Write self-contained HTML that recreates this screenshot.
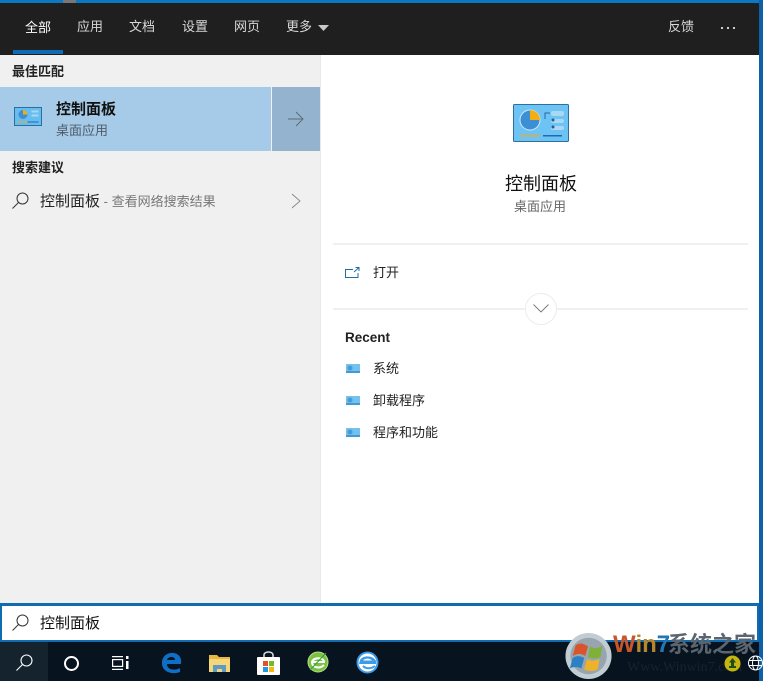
<!DOCTYPE html>
<html lang="zh-CN"><head><meta charset="utf-8"><title>控制面板</title>
<style>
html,body{margin:0;padding:0;background:#fff}
#r{position:relative;width:763px;height:681px;overflow:hidden;background:#fff;font-family:"Liberation Sans","Noto Sans CJK SC",sans-serif}
.b{position:absolute}
.t{position:absolute;white-space:nowrap;line-height:20px;height:20px;font-size:13px;color:#1a1a1a}
.n{color:#d8d8d8}
svg{position:absolute;overflow:visible}
</style></head><body><div id="r">
<div class="b" style="left:0;top:0;width:763px;height:3px;background:#0b78c4"></div>
<div class="b" style="left:63px;top:0;width:13px;height:3px;background:#777"></div>
<div class="b" style="left:0;top:3px;width:759px;height:52px;background:#1f1f1f"></div>
<div class="b" style="left:759px;top:0;width:4px;height:681px;background:#0d5fa8"></div>
<div class="b" style="left:13px;top:50px;width:50px;height:4px;background:#0f6cb4"></div>
<div class="t" style="left:25px;top:18px;color:#fff">全部</div>
<div class="t n" style="left:77px;top:17px">应用</div>
<div class="t n" style="left:129px;top:17px">文档</div>
<div class="t n" style="left:182px;top:17px">设置</div>
<div class="t n" style="left:234px;top:17px">网页</div>
<div class="t n" style="left:286px;top:17px">更多</div>
<svg style="left:318px;top:25px" width="11" height="6"><path d="M0 0H11L5.500 6Z" fill="#c8c8c8"/></svg>
<div class="t n" style="left:668px;top:17px">反馈</div>
<div class="b" style="left:721px;top:27px;width:2px;height:2px;background:#ccc"></div>
<div class="b" style="left:727px;top:27px;width:2px;height:2px;background:#ccc"></div>
<div class="b" style="left:733px;top:27px;width:2px;height:2px;background:#ccc"></div>

<div class="b" style="left:0;top:55px;width:320px;height:548px;background:#f0f0f0"></div>
<div class="b" style="left:320px;top:55px;width:1px;height:548px;background:#e8e8e8"></div>
<div class="t" style="left:12px;top:62px;font-weight:bold;color:#222">最佳匹配</div>
<div class="b" style="left:0;top:87px;width:271px;height:64px;background:#a6cbe8"></div>
<div class="b" style="left:272px;top:87px;width:48px;height:64px;background:#93b3ce"></div>
<svg style="left:14px;top:106px" width="28" height="21" viewBox="0 0 56 38"><rect x="1" y="1" width="54" height="36" fill="#66bdf0" stroke="#2b6f9f" stroke-width="2"/><circle cx="18" cy="15" r="9" fill="#3f8fd0"/><path d="M18 15V6A9 9 0 0 1 27 15Z" fill="#f4ae14"/><rect x="35" y="7" width="14" height="4" fill="#a9d8f3"/><rect x="35" y="15" width="14" height="4" fill="#a9d8f3"/><rect x="7" y="29" width="20" height="2" fill="#e6ad2c"/><rect x="27" y="29" width="22" height="2" fill="#1d6bb0"/></svg>
<div class="t" style="left:56px;top:100px;font-size:15px;font-weight:bold;color:#111">控制面板</div>
<div class="t" style="left:56px;top:121px;color:#4f5c68">桌面应用</div>
<svg style="left:288px;top:111px" width="16" height="16" fill="none" stroke="#5b6a78" stroke-width="0.900"><path d="M0 8H15M8 1L15 8L8 15"/></svg>
<div class="t" style="left:12px;top:158px;font-weight:bold;color:#222">搜索建议</div>
<svg style="left:12px;top:192px" width="18" height="18" fill="none" stroke="#333" stroke-width="1"><circle cx="10.500" cy="6.500" r="5.500"/><path d="M6.500 10.500L0.500 16.500"/></svg>
<div class="t" style="left:40px;top:192px;font-size:15px;line-height:20px;color:#222">控制面板<span style="font-size:13px;color:#777"> - 查看网络搜索结果</span></div>
<svg style="left:291px;top:193px" width="10" height="16" fill="none" stroke="#888" stroke-width="0.900"><path d="M1 1L9 8L1 15"/></svg>

<svg style="left:513px;top:104px" width="56" height="38" viewBox="0 0 56 38"><rect x="0.500" y="0.500" width="55" height="37" rx="1" fill="#6cc3f4" stroke="#2f6f9e"/><circle cx="17" cy="16" r="10" fill="#3c8fd2" stroke="#cfeafb"/><path d="M17 16V6A10 10 0 0 1 27 16Z" fill="#f4ae14"/><path d="M32 15V9H37" fill="none" stroke="#2a6a9a"/><rect x="38" y="7" width="13" height="5" rx="2" fill="#a9d8f3"/><rect x="38" y="15" width="13" height="4" rx="2" fill="#a9d8f3"/><rect x="38" y="22" width="13" height="4" rx="2" fill="#a9d8f3"/><circle cx="40" cy="16" r="1.500" fill="#1e5f95"/><circle cx="40" cy="23" r="1.500" fill="#1e5f95"/><rect x="7" y="31" width="20" height="1.500" fill="#e6ad2c"/><rect x="30" y="31" width="19" height="1.500" fill="#1d6bb0"/></svg>
<div class="t" style="left:505px;top:174px;font-size:18px;color:#111;line-height:20px">控制面板</div>
<div class="t" style="left:514px;top:197px;color:#666">桌面应用</div>
<div class="b" style="left:333px;top:243px;width:415px;height:2px;background:#f0f0f0"></div>
<svg style="left:345px;top:267px" width="15" height="11" fill="none" stroke="#1d6ea5" stroke-width="1"><path d="M8 2.500H0.500V10.500H13V6M9 5L14 0.500M10.500 0.500H14V4"/></svg>
<div class="t" style="left:373px;top:263px;color:#222">打开</div>
<div class="b" style="left:333px;top:308px;width:415px;height:2px;background:#f0f0f0"></div>
<div class="b" style="left:525px;top:293px;width:30px;height:30px;border-radius:50%;background:#fff;border:1px solid #ececec"></div>
<svg style="left:533px;top:304px" width="16" height="9" fill="none" stroke="#777" stroke-width="0.900"><path d="M0.500 0.500L8 8L15.500 0.500"/></svg>
<div class="t" style="left:345px;top:328px;font-size:13.500px;font-weight:bold;color:#222">Recent</div>
<svg style="left:346px;top:364px" width="14" height="9" viewBox="0 0 14 9"><rect width="14" height="9" fill="#72c1ee"/><circle cx="4" cy="4" r="2.500" fill="#4c9ad3"/><rect y="7" width="14" height="2" fill="#3f9ad6"/></svg>
<div class="t" style="left:373px;top:359px;color:#222">系统</div>
<svg style="left:346px;top:396px" width="14" height="9" viewBox="0 0 14 9"><rect width="14" height="9" fill="#72c1ee"/><circle cx="4" cy="4" r="2.500" fill="#4c9ad3"/><rect y="7" width="14" height="2" fill="#3f9ad6"/></svg>
<div class="t" style="left:373px;top:391px;color:#222">卸载程序</div>
<svg style="left:346px;top:428px" width="14" height="9" viewBox="0 0 14 9"><rect width="14" height="9" fill="#72c1ee"/><circle cx="4" cy="4" r="2.500" fill="#4c9ad3"/><rect y="7" width="14" height="2" fill="#3f9ad6"/></svg>
<div class="t" style="left:373px;top:423px;color:#222">程序和功能</div>

<div class="b" style="left:0;top:603px;width:759px;height:39px;box-sizing:border-box;background:#fff;border:2px solid #0f6cb0;border-top-width:3px"></div>
<svg style="left:12px;top:614px" width="18" height="18" fill="none" stroke="#333" stroke-width="1"><circle cx="10.500" cy="6.500" r="5.500"/><path d="M6.500 10.500L0.500 16.500"/></svg>
<div class="t" style="left:40px;top:614px;font-size:15px;color:#111">控制面板</div>

<div class="b" style="left:0;top:642px;width:759px;height:39px;background:#07131f"></div>
<div class="b" style="left:0;top:642px;width:48px;height:39px;background:#15232f"></div>
<svg style="left:16px;top:654px" width="17" height="17" fill="none" stroke="#fff" stroke-width="1.100"><circle cx="10.500" cy="6.500" r="5.500"/><path d="M6.500 10.500L0.500 16.500"/></svg>
<div class="b" style="left:64px;top:656px;width:11px;height:11px;border:2.500px solid #fff;border-radius:50%"></div>
<svg style="left:112px;top:656px" width="17" height="14" fill="none" stroke="#fff" stroke-width="1.200"><path d="M0 .6H11M0 13.400H11"/><rect x="0.600" y="3.600" width="10" height="6.800"/><rect x="14" y="0" width="2.500" height="3" fill="#fff" stroke="none"/><rect x="14" y="5" width="2.500" height="8" fill="#fff" stroke="none"/></svg>
<svg style="left:161px;top:652px" width="21" height="22" viewBox="0 0 21 22"><path d="M20 12H6C6 18 14 19 19 16V20C11 23 1 20 1 11C1 3 8 0 13 1C18 2 21 6 20 12ZM6 8H14C14 4 7 4 6 8Z" fill="#0f6fc6"/></svg>
<svg style="left:209px;top:654px" width="22" height="19" viewBox="0 0 22 19"><path d="M0 1H8L10 3H21V18H0Z" fill="#e8b73f"/><rect x="0" y="5" width="21" height="13" fill="#f6d67a"/><path d="M4 18V11H17V18H13V15H8V18Z" fill="#5d9bc4"/></svg>
<svg style="left:257px;top:651px" width="23" height="24" viewBox="0 0 23 24"><path d="M7 7V4C7 0 16 0 16 4V7" fill="none" stroke="#ddd" stroke-width="1.500"/><rect x="0" y="6" width="23" height="18" rx="1" fill="#fff"/><rect x="6" y="10" width="5" height="5" fill="#e3502a"/><rect x="12" y="10" width="5" height="5" fill="#7ab81f"/><rect x="6" y="16" width="5" height="5" fill="#1f9ae0"/><rect x="12" y="16" width="5" height="5" fill="#f5b80d"/></svg>
<svg style="left:307px;top:651px" width="22" height="22" viewBox="0 0 22 22"><circle cx="11" cy="11" r="10" fill="#7cc242"/><circle cx="11" cy="11" r="10" fill="none" stroke="#b9e08a"/><path d="M5 11H17C17 6 6 6 5 11C5 17 13 18 17 14" fill="none" stroke="#fff" stroke-width="2"/><path d="M3 19L19 2" stroke="#2f9a3c" stroke-width="1"/></svg>
<svg style="left:356px;top:651px" width="23" height="23" viewBox="0 0 23 23"><circle cx="11.500" cy="11.500" r="11" fill="#3d9be8"/><circle cx="11.500" cy="11.500" r="9" fill="#fff"/><path d="M3 13H20V10C17 4 7 4 4 9ZM7 9.500H16C14 7 9 7 7 9.500Z" fill="#3d9be8" fill-rule="evenodd"/><path d="M7 15C10 18 15 18 19 15" fill="none" stroke="#3d9be8" stroke-width="2"/></svg>

<svg style="left:565px;top:632px" width="48" height="48" viewBox="0 0 50 50"><circle cx="24.500" cy="25" r="24" fill="#c2ccd3"/><circle cx="24.500" cy="25" r="19" fill="#98a5af"/><path d="M11 14C17 10 20 13 24 15L21 25C17 22 13 22 8 25Z" fill="#d9542b"/><path d="M26 15C31 18 35 17 39 14L37 26C33 28 29 28 24 26Z" fill="#7fb13a"/><path d="M8 27C13 24 16 25 20 27L17 38C13 36 9 36 5 38Z" fill="#2c80c4"/><path d="M23 28C28 31 32 30 36 28L34 39C30 41 25 41 20 39Z" fill="#eeb22a"/></svg>
<div class="t" style="left:613px;top:632px;font-size:24px;font-weight:bold;line-height:26px;height:26px;color:#c8562a">W<span style="color:#b8862a">in</span><span style="color:#2176b5">7</span></div>
<div class="t" style="left:668px;top:632px;font-size:22px;font-weight:bold;line-height:26px;height:26px;color:#5a6570">系统之家</div>
<div class="t" style="left:627px;top:658px;font-size:14px;color:#18232d;font-family:'Liberation Serif',serif">Www.Winwin7.com</div>
<svg style="left:724px;top:655px" width="17" height="17" viewBox="0 0 17 17"><circle cx="8.500" cy="8.500" r="8" fill="#c5b511"/><path d="M8.500 3L12 7.500H10V11H12V13H5V11H7V7.500H5Z" fill="#1f4d1b"/></svg>
<svg style="left:748px;top:655px" width="15" height="16" viewBox="0 0 15 16" fill="none" stroke="#fff"><circle cx="7.500" cy="8" r="7"/><ellipse cx="7.500" cy="8" rx="3" ry="7"/><path d="M1 5.500H14M1 10.500H14"/></svg>
</div></body></html>
